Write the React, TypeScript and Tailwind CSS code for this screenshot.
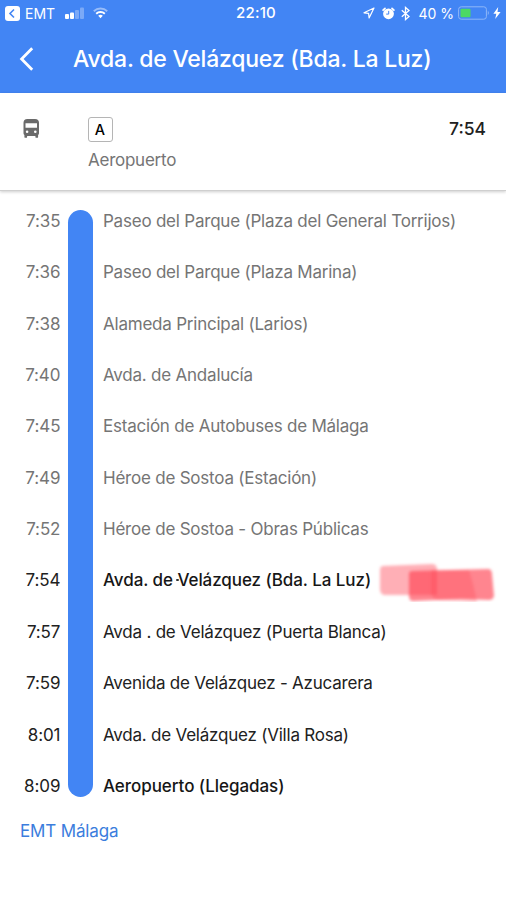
type Stop = {
    time: string;
    name: string;
    tone: 'past' | 'next' | 'current' | 'last';
};

const stops: Stop[] = [
    { time: '7:35', name: 'Paseo del Parque (Plaza del General Torrijos)', tone: 'past' },
    { time: '7:36', name: 'Paseo del Parque (Plaza Marina)', tone: 'past' },
    { time: '7:38', name: 'Alameda Principal (Larios)', tone: 'past' },
    { time: '7:40', name: 'Avda. de Andalucía', tone: 'past' },
    { time: '7:45', name: 'Estación de Autobuses de Málaga', tone: 'past' },
    { time: '7:49', name: 'Héroe de Sostoa (Estación)', tone: 'past' },
    { time: '7:52', name: 'Héroe de Sostoa - Obras Públicas', tone: 'past' },
    { time: '7:54', name: 'Avda. de Velázquez (Bda. La Luz)', tone: 'current' },
    { time: '7:57', name: 'Avda . de Velázquez (Puerta Blanca)', tone: 'next' },
    { time: '7:59', name: 'Avenida de Velázquez - Azucarera', tone: 'next' },
    { time: '8:01', name: 'Avda. de Velázquez (Villa Rosa)', tone: 'next' },
    { time: '8:09', name: 'Aeropuerto (Llegadas)', tone: 'last' },
];

const nameTone = {
    past: 'text-[#757575] tracking-[-0.22px]',
    next: 'text-[#212121] tracking-[-0.22px]',
    current: 'text-[#161616] font-medium tracking-[-0.07px]',
    last: 'text-[#161616] font-medium tracking-[-0.05px]',
};

function StatusBar() {
    return (
        <div className="grid grid-cols-3 items-center h-[26px] pl-[5px] pr-[5px] text-[15px]">
            <div className="flex items-center">
                <svg width="15" height="15" viewBox="0 0 15 15">
                    <rect width="15" height="15" rx="3" fill="#fff" />
                    <path d="M9 3.5 5 7.5l4 4" fill="none" stroke="#4285f4" strokeWidth="1.6" />
                </svg>
                <span className="ml-[5px] text-[14px]">EMT</span>
                <svg className="ml-[10px]" width="20" height="13" viewBox="0 0 20 13" fill="#fff">
                    <rect x="0" y="7" width="4" height="5" rx="1" />
                    <rect x="5" y="5.5" width="4" height="6.5" rx="1" />
                    <rect x="10" y="3" width="4" height="9" rx="1" opacity=".3" />
                    <rect x="15" y="0.5" width="4" height="11.5" rx="1" opacity=".3" />
                </svg>
                <svg className="ml-[8px]" width="15" height="12" viewBox="0 0 15 12" fill="none" stroke="#fff">
                    <path d="M.8 4.2a9.6 9.6 0 0 1 13.4 0" strokeWidth="1.9" opacity=".45" />
                    <path d="M3.2 6.8a6.2 6.2 0 0 1 8.6 0" strokeWidth="1.9" />
                    <path d="M7.5 11.2 5.2 8.8a3.4 3.4 0 0 1 4.6 0z" fill="#fff" stroke="none" />
                </svg>
            </div>
            <div className="pl-[6px] text-center font-medium tracking-[0.2px]">22:10</div>
            <div className="flex items-center justify-end">
                <svg width="12" height="12" viewBox="0 0 12 12">
                    <path d="M11 1 1 5.8l4.6.6.5 4.6z" fill="none" stroke="#fff" strokeWidth="1.2" strokeLinejoin="round" />
                </svg>
                <svg className="ml-[7px]" width="13" height="13" viewBox="0 0 13 13">
                    <circle cx="6.5" cy="6.8" r="5.4" fill="#fff" />
                    <path d="M1.1 3.2 3 1.3M11.9 3.2 10 1.3" stroke="#fff" strokeWidth="1.7" strokeLinecap="round" />
                    <path d="M6.7 3.9v3.2H4.2" fill="none" stroke="#4285f4" strokeWidth="1" />
                </svg>
                <svg className="ml-[6px] mr-px" width="9" height="15" viewBox="0 0 9 15">
                    <path d="M.8 4.2 8 10.6l-3.5 3V1.4L8 4.4.8 10.8" fill="none" stroke="#fff" strokeWidth="1.3" />
                </svg>
                <span className="ml-[7px] text-[14px] whitespace-nowrap">40 %</span>
                <svg className="ml-[4px]" width="32" height="14" viewBox="0 0 32 14">
                    <rect x=".6" y=".8" width="27.8" height="12.4" rx="2.6" fill="none" stroke="#8fb7f8" strokeWidth="1" />
                    <rect x="2.5" y="2.7" width="10" height="8.6" rx="1" fill="#4cd964" />
                    <path d="M29.8 4.8q2 2.2 0 4.4z" fill="#8fb7f8" />
                </svg>
                <svg className="ml-[3px]" width="8" height="12" viewBox="0 0 8 12">
                    <path d="M5.2 0 .4 6.8h2.9L2.2 12l5.4-7H4.5z" fill="#fff" />
                </svg>
            </div>
        </div>
    );
}

function Header() {
    return (
        <header className="h-[93px] bg-[#4285f4] text-white">
            <StatusBar />
            <div className="flex items-center h-[66px] pl-[18px]">
                <svg width="16" height="24" viewBox="0 0 16 24">
                    <path d="M14.2 1.2 3.6 12l10.6 10.8" fill="none" stroke="#fff" strokeWidth="2.8" />
                </svg>
                <h1 className="ml-[39px] text-[23px] leading-[30px] font-medium whitespace-nowrap tracking-[-0.23px]">
                    Avda. de Velázquez (Bda. La Luz)
                </h1>
            </div>
        </header>
    );
}

function LineSummary() {
    return (
        <section className="flex h-[98px] pl-[23px] pr-[20px] pt-[24px] border-b border-[#cfcfcf] shadow-[0_1px_3px_rgba(0,0,0,0.2)]">
            <svg className="mt-[2px]" width="17" height="20" viewBox="0 0 17 20" fill="#6a6a6a">
                <path
                    fillRule="evenodd"
                    d="M4.4 0h7.6Q16 .2 16 3.8v10.4q0 1.1-.9 1.9v1.8q0 .9-.9.9h-.9q-.9 0-.9-.9v-1H4.1v1q0 .9-.9.9h-.9q-.9 0-.9-.9v-1.8q-.9-.8-.9-1.9V3.8Q.5.2 4.4 0zM2.5 4.2v4.6H14V4.2zm1.6 7.2a1.3 1.3 0 1 0 0 2.6 1.3 1.3 0 0 0 0-2.6zm8.2 0a1.3 1.3 0 1 0 0 2.6 1.3 1.3 0 0 0 0-2.6z"
                />
            </svg>
            <div className="ml-[48px] flex-1">
                <div className="flex items-center justify-center w-[25px] h-[25px] rounded-[3px] border border-[#b5b5b5] pr-px text-[14.5px] font-medium text-black">
                    A
                </div>
                <div className="mt-[7px] text-[17px] leading-[22px] tracking-[-0.25px] text-[#757575]">Aeropuerto</div>
            </div>
            <div className="text-[17.5px] leading-[24px] font-medium text-[#212121]">7:54</div>
        </section>
    );
}

// Marker strokes scribbled next to the current stop
function Highlight() {
    return (
        <svg className="absolute left-[376px] top-[5px]" width="122" height="42" viewBox="0 0 122 42">
            <g className="blur-[1.6px]" fill="#ff4050">
                <path d="M6 6 57 4q4 1 4 5v26L8 35q-4-1-4-6V10q0-3 2-4z" opacity=".42" />
                <path d="M36 11 113 9q3 1 3 5l2 22q-1 4-5 4l-28-1-48 2q-4 0-4-5V14q0-3 3-3z" opacity=".64" />
                <path d="M55 10h38q5 16 8 32l-40-2q-4-1-6-6z" opacity=".28" />
            </g>
        </svg>
    );
}

export default function App() {
    return (
        <div className="w-full h-[900px] overflow-hidden bg-white font-['Inter','Liberation_Sans',sans-serif]">
            <Header />
            <LineSummary />
            <main className="relative grid grid-cols-[60.4px_24.6px_1fr] gap-x-[8px] pt-[5px]">
                <div className="flex flex-col">
                    {stops.map(stop => (
                        <div
                            key={stop.time}
                            className={`flex items-center justify-end h-[51.36px] text-[17px] tracking-[-0.1px] ${stop.tone === 'past' ? 'text-[#757575]' : 'text-[#212121]'}`}
                        >
                            {stop.time}
                        </div>
                    ))}
                </div>
                <div className="mt-[14px] mb-[15.5px] rounded-full bg-[#4285f4]" />
                <div className="flex flex-col pl-[2px]">
                    {stops.map(stop => (
                        <div
                            key={stop.time}
                            className={`flex items-center h-[51.36px] text-[17px] whitespace-nowrap ${nameTone[stop.tone]}`}
                        >
                            {stop.name}
                        </div>
                    ))}
                </div>
                <div className="absolute left-0 top-[363.5px]">
                    <Highlight />
                    <span className="absolute left-[176px] top-[24px] w-[3px] h-[2px] rounded-full bg-[#333]" />
                </div>
            </main>
            <a className="block mt-[7px] pl-[20px] text-[17px] leading-[24px] tracking-[-0.15px] text-[#3b7ddd]">EMT Málaga</a>
        </div>
    );
}
